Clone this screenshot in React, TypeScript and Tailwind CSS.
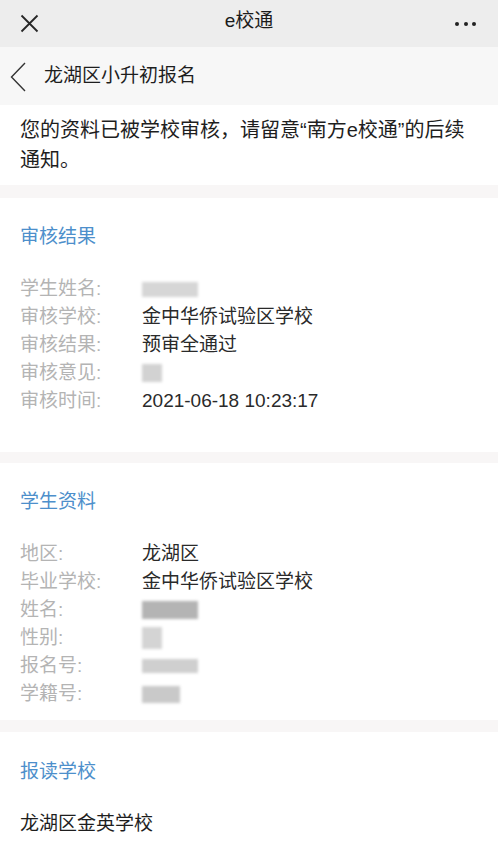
import React from 'react';

interface Row {
  label: string;
  value?: string;
  blur?: string;
}

const font = { fontFamily: '"Liberation Sans", "Noto Sans CJK SC", sans-serif' };

const auditRows: Row[] = [
  { label: '学生姓名:', blur: 'w-[56px] h-[15px] bg-[#d6d6d6]' },
  { label: '审核学校:', value: '金中华侨试验区学校' },
  { label: '审核结果:', value: '预审全通过' },
  { label: '审核意见:', blur: 'w-[20px] h-[18px] bg-[#d2d2d2]' },
  { label: '审核时间:', value: '2021-06-18 10:23:17' },
];

const studentRows: Row[] = [
  { label: '地区:', value: '龙湖区' },
  { label: '毕业学校:', value: '金中华侨试验区学校' },
  { label: '姓名:', blur: 'w-[56px] h-[18px] bg-[#b4b4b4]' },
  { label: '性别:', blur: 'w-[20px] h-[22px] bg-[#d4d4d4]' },
  { label: '报名号:', blur: 'w-[56px] h-[14px] bg-[#cfcfcf]' },
  { label: '学籍号:', blur: 'w-[38px] h-[17px] bg-[#c9c9c9]' },
];

function InfoRows({ rows }: { rows: Row[] }) {
  return (
    <div className="flex flex-col">
      {rows.map(r => (
        <div key={r.label} className="flex h-[28px] items-center text-[19px] leading-[28px]">
          <span className="w-[122px] shrink-0 text-[#b4b4b4]">{r.label}</span>
          {r.value ? (
            <span className="text-[#2a2a2a]">{r.value}</span>
          ) : (
            <span className={`inline-block blur-[1.5px] ${r.blur}`} />
          )}
        </div>
      ))}
    </div>
  );
}

export default function App() {
  return (
    <div className="min-h-[846px] w-[498px] bg-[#f8f6f6]" style={font}>
      {/* top bar */}
      <div className="relative flex h-[47px] items-center justify-between bg-[#ededed] px-[20px]">
        <svg width="19" height="19" viewBox="0 0 19 19" className="mt-[-1px]">
          <path d="M1.5 1.5 L17.5 17.5 M17.5 1.5 L1.5 17.5" stroke="#262626" strokeWidth="1.8" fill="none" />
        </svg>
        <span className="absolute left-1/2 top-[8px] -translate-x-1/2 text-[19px] leading-[26px] text-[#1b1b1b]">e校通</span>
        <div className="mr-[2px] flex gap-[4.5px]">
          <span className="h-[4px] w-[4px] rounded-full bg-[#222]" />
          <span className="h-[4px] w-[4px] rounded-full bg-[#222]" />
          <span className="h-[4px] w-[4px] rounded-full bg-[#222]" />
        </div>
      </div>

      {/* sub nav */}
      <div className="flex h-[58px] items-center bg-[#f7f7f7] pl-[10px]">
        <svg width="16" height="30" viewBox="0 0 16 30" className="mt-[2px]">
          <path d="M15 1 L1.5 15 L15 29" stroke="#333" strokeWidth="1.4" fill="none" />
        </svg>
        <span className="ml-[18px] text-[19px] text-[#1e1e1e]">龙湖区小升初报名</span>
      </div>

      {/* notice */}
      <div className="bg-white px-[20px] pt-[10px] pb-[10px] text-[20px] leading-[30px] text-[#1e1e1e]">
        您的资料已被学校审核，请留意“南方e校通”的后续通知。
      </div>

      {/* audit result */}
      <section className="mt-[13px] bg-white px-[20px] pt-[25px] pb-[37px]">
        <h2 className="text-[19px] leading-[28px] text-[#4d8fcb]">审核结果</h2>
        <div className="mt-[24px]">
          <InfoRows rows={auditRows} />
        </div>
      </section>

      {/* student info */}
      <section className="mt-[11px] bg-white px-[20px] pt-[25px] pb-[12px]">
        <h2 className="text-[19px] leading-[28px] text-[#4d8fcb]">学生资料</h2>
        <div className="mt-[24px]">
          <InfoRows rows={studentRows} />
        </div>
      </section>

      {/* target school */}
      <section className="mt-[12px] bg-white px-[20px] pt-[26px] pb-[20px]">
        <h2 className="text-[19px] leading-[28px] text-[#4d8fcb]">报读学校</h2>
        <p className="mt-[24px] text-[19px] leading-[28px] text-[#1e1e1e]">龙湖区金英学校</p>
      </section>
    </div>
  );
}
